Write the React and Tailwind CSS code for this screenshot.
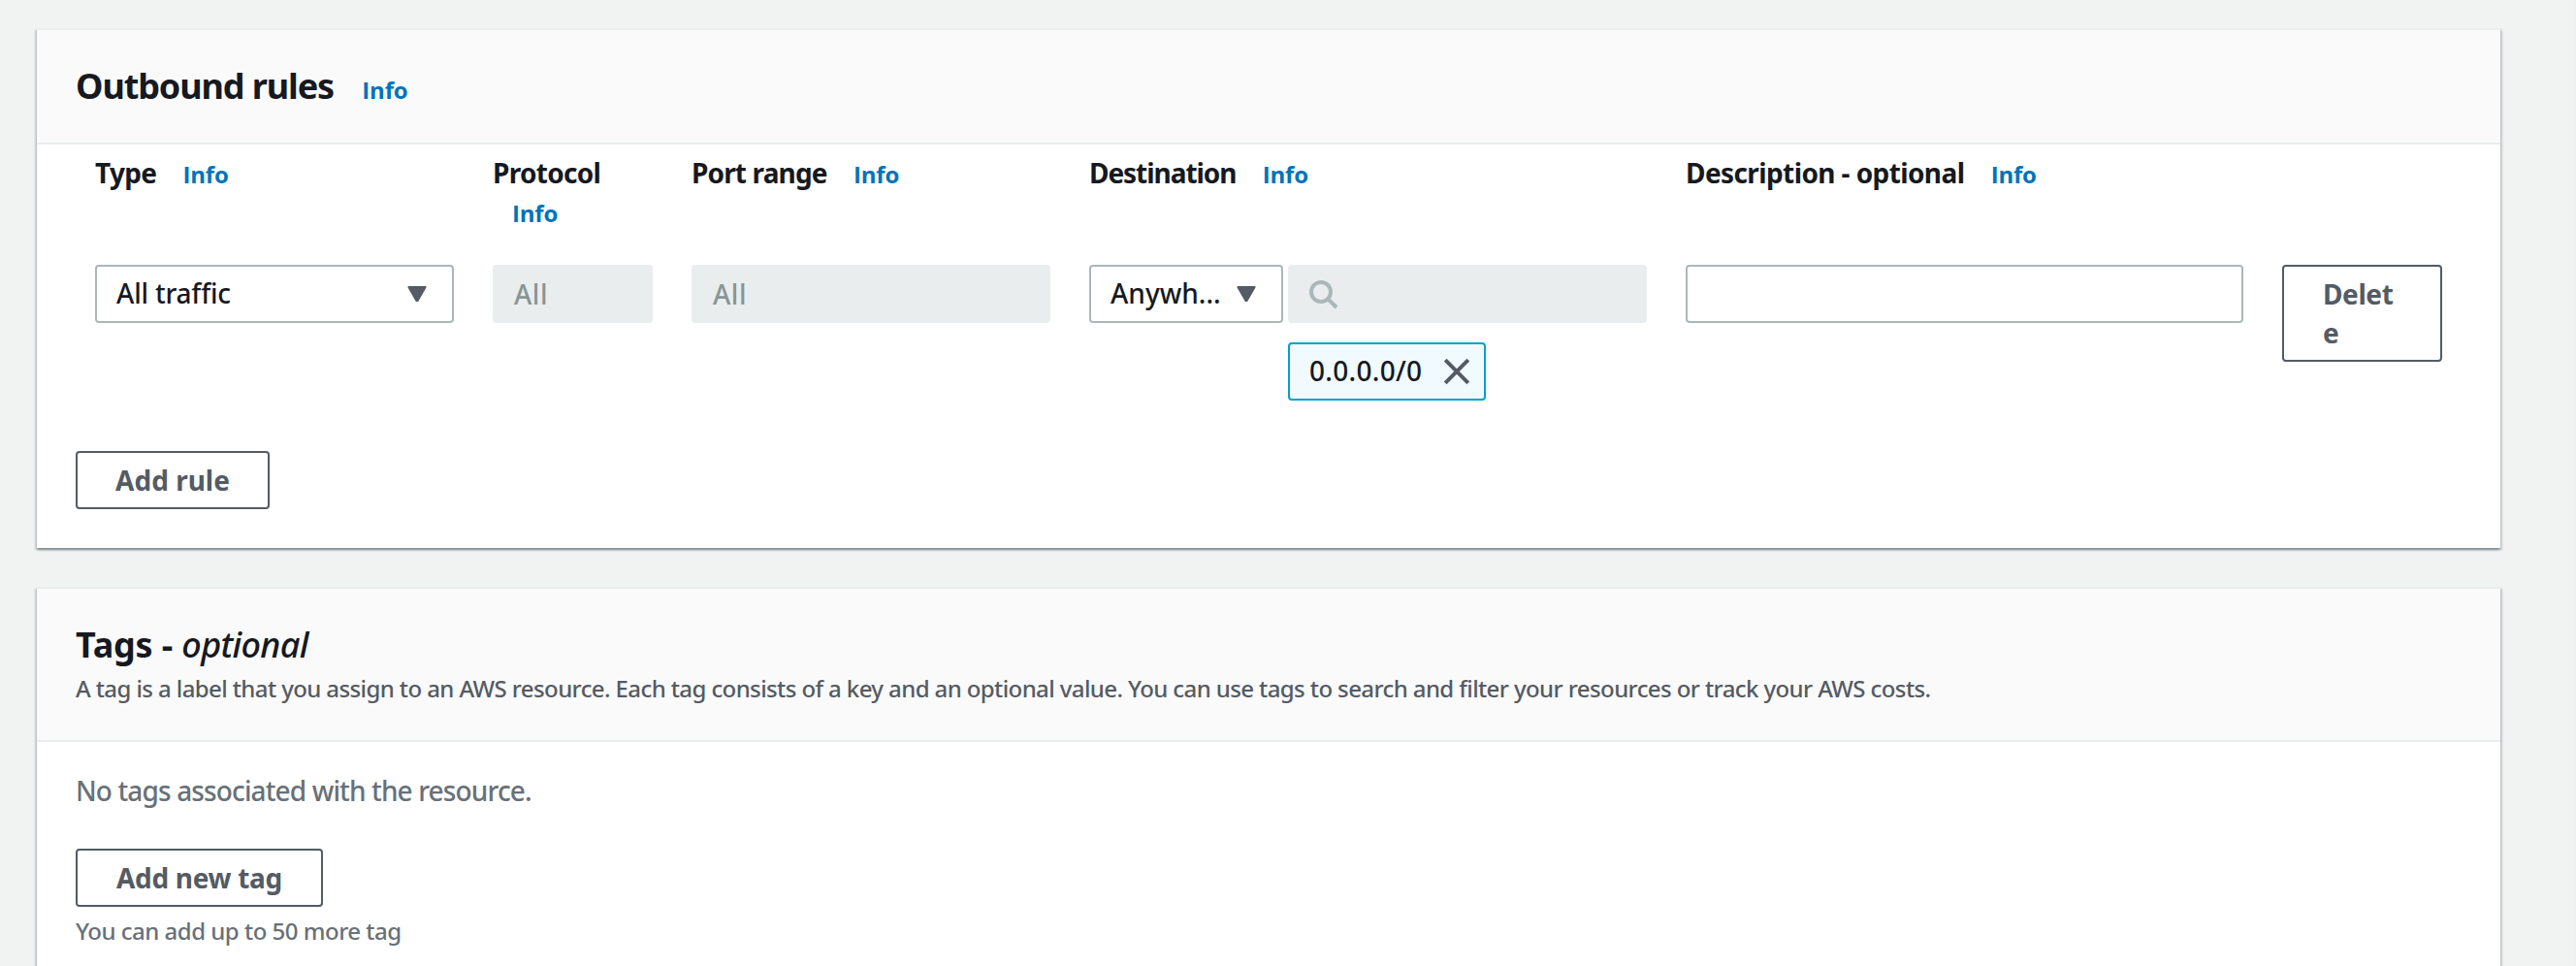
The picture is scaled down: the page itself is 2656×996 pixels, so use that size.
import React from "react";

function Caret() {
  return (
    <svg className="mt-[2px] h-4 w-5 shrink-0" viewBox="0 0 20 16" fill="#545b64" stroke="#545b64" strokeWidth="2" strokeLinejoin="round">
      <path d="M1.4 1H18.6L10.6 15H9.4Z" />
    </svg>
  );
}

function SearchIcon() {
  return (
    <svg className="h-8 w-8" viewBox="0 0 32 32" fill="none" stroke="#aab7b8" strokeWidth="4">
      <circle cx="14" cy="14" r="10" />
      <path d="M20.8 20.8L30 30" />
    </svg>
  );
}

function CloseIcon() {
  return (
    <svg className="h-7 w-7 shrink-0" viewBox="0 0 28 28" fill="none" stroke="#545b64" strokeWidth="4">
      <path d="M2.2 2.2L25.8 25.8M25.8 2.2L2.2 25.8" />
    </svg>
  );
}

function Info({ className = "" }) {
  return (
    <a className={`font-['Open_Sans',sans-serif] text-[24px] leading-none font-bold tracking-[-0.2px] text-[#0073bb] ${className}`}>
      Info
    </a>
  );
}

function Label({ children, className }) {
  return (
    <div className="leading-10 font-bold">
      <span className={className}>{children}</span> <Info className="ml-[20px]" />
    </div>
  );
}

function Panel({ header, children, className = "" }) {
  return (
    <section
      className={`border-t-2 border-[#eaeded] bg-white shadow-[0_2px_2px_0_rgba(0,28,36,0.3),2px_2px_2px_0_rgba(0,28,36,0.15),-2px_2px_2px_0_rgba(0,28,36,0.15)] ${className}`}
    >
      <header className="border-b-2 border-[#eaeded] bg-[#fafafa] px-10">{header}</header>
      {children}
    </section>
  );
}

const control = "flex h-[60px] items-center rounded-[4px]";
const select = `${control} justify-between border-2 border-[#aab7b8] bg-white pb-[2px] pl-5`;
const disabled = `${control} bg-[#eaeded] pl-[22px] text-[#879596]`;
const button = "rounded-[4px] border-2 border-[#545b64] bg-white font-bold text-[#545b64]";
const columns = "grid grid-cols-[370px_165px_370px_575px_575px_165px] gap-x-10";

export default function App() {
  return (
    <main className="h-[996px] w-[2656px] overflow-hidden border-r-2 border-[#eeeff0] bg-[#f1f3f3] pt-[29px] pl-[38px] font-['Noto_Sans',sans-serif] text-[28px] font-medium text-[#16191f]">
      <div className="flex w-[2540px] flex-col gap-10">
        <Panel
          className="pb-10"
          header={
            <div className="flex h-[116px] items-center">
              <h2 className="text-[36px] leading-[44px] font-bold tracking-[-1.1px]">
                Outbound rules <Info className="ml-[21px]" />
              </h2>
            </div>
          }
        >
          <div className={`${columns} h-[124px] px-[60px] pt-[9px]`}>
            <Label className="tracking-[-0.7px]">Type</Label>
            <Label className="tracking-[-0.7px]">Protocol</Label>
            <Label className="tracking-[-0.85px]">Port range</Label>
            <Label className="tracking-[-1.05px]">Destination</Label>
            <Label className="tracking-[-0.6px]">Description - optional</Label>
          </div>
          <div className={`${columns} px-[60px]`}>
            <div className={`${select} pr-[26px]`}>
              <span className="tracking-[-0.2px]">All traffic</span>
              <Caret />
            </div>
            <div className={`${disabled} tracking-[0.5px]`}>All</div>
            <div className={`${disabled} tracking-[0.5px]`}>All</div>
            <div className="flex items-start gap-[5px]">
              <div className={`${select} w-[200px] pr-[26px]`}>
                <span>Anywh...</span>
                <Caret />
              </div>
              <div className="flex flex-1 flex-col items-start gap-5">
                <div className="flex h-[60px] w-full items-center rounded-[4px] bg-[#eaeded] pl-5">
                  <SearchIcon />
                </div>
                <div className="flex h-[60px] w-[204px] items-center justify-between rounded-[4px] border-2 border-[#00a1c9] bg-[#f1faff] pr-[14px] pl-5">
                  <span className="pb-[2px] tracking-[0.3px]">0.0.0.0/0</span>
                  <CloseIcon />
                </div>
              </div>
            </div>
            <input className="h-[60px] rounded-[4px] border-2 border-[#aab7b8] bg-white px-5" />
            <button className={`${button} h-[100px] self-start pr-[38px] pl-[40px] text-left leading-10 tracking-[-0.4px] break-all`}>
              Delete
            </button>
          </div>
          <div className="px-10 pt-[52px]">
            <button className={`${button} flex h-[60px] w-[200px] items-center justify-center pb-[1px]`}>Add rule</button>
          </div>
        </Panel>

        <Panel
          className="h-[500px]"
          header={
            <div className="flex h-[156px] flex-col gap-[5px] pt-[36px]">
              <h2 className="text-[36px] leading-[44px] font-bold">
                <span className="tracking-[-0.2px]">Tags -</span> <em className="font-medium tracking-[-0.7px]">optional</em>
              </h2>
              <p className="text-[24px] leading-9 tracking-[-0.6px] text-[#545b64]">
                A tag is a label that you assign to an AWS resource. Each tag consists of a key and an optional value. You
                can use tags to search and filter your resources or track your AWS costs.
              </p>
            </div>
          }
        >
          <div className="flex flex-col items-start px-10 pt-[30px]">
            <p className="leading-10 tracking-[-0.87px] text-[#687078]">No tags associated with the resource.</p>
            <button className={`${button} mt-[40px] flex h-[60px] w-[255px] items-center justify-center pb-[1px] tracking-[-0.3px]`}>
              Add new tag
            </button>
            <p className="mt-[7px] text-[24px] leading-9 tracking-[-0.5px] text-[#687078]">You can add up to 50 more tag</p>
          </div>
        </Panel>
      </div>
    </main>
  );
}
